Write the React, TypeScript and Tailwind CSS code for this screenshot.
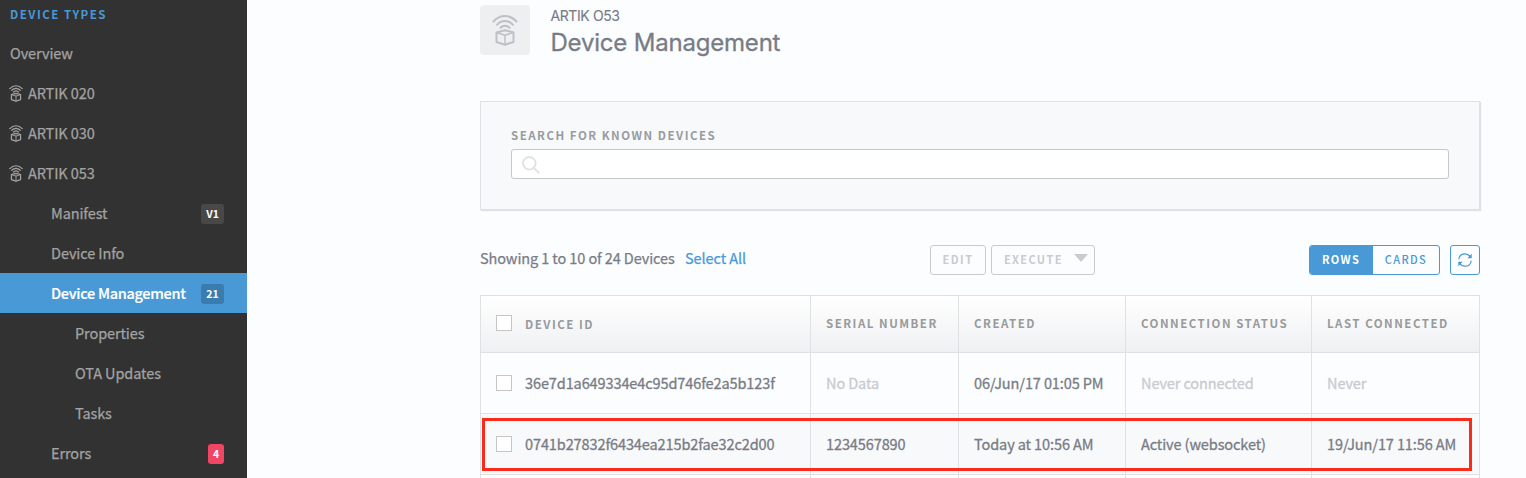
import type { ReactNode } from 'react';

function DeviceIcon({ className, stroke }: { className: string; stroke: number }) {
  return (
    <svg viewBox="0 0 26 31" className={className} fill="none" stroke="currentColor" strokeWidth={stroke} strokeLinecap="round" strokeLinejoin="round">
      <path d="M1.500 6.500C8 -.7 18 -.7 24.500 6.500" />
      <path d="M5 9.800C9.500 4.700 16.500 4.700 21 9.800" />
      <path d="M8.500 12.800C11 10.100 15 10.100 17.500 12.800" />
      <path d="M13 15.200L21.500 17.500V27L13 29.800L4.500 27V17.500Z" />
      <path d="M4.500 17.500L13 20.300L21.500 17.500M13 20.300V29.500" strokeWidth={stroke * 0.75} />
    </svg>
  );
}

type NavProps = { children: ReactNode; pad: string; icon?: boolean; active?: boolean; badge?: string; badgeClass?: string };

function NavItem({ children, pad, icon, active, badge, badgeClass }: NavProps) {
  return (
    <a className={`flex h-10 items-center pr-[23px] text-[14.500px] ${pad} ${active ? 'bg-[#4899d6] font-medium tracking-[-0.300px] text-white [-webkit-text-stroke:0.2px]' : 'tracking-[-0.1px] text-[#a3a3a3] [-webkit-text-stroke:0.25px]'}`}>
      {icon && <DeviceIcon className="mt-px mr-[5px] h-[17px] w-[14px] shrink-0 -ml-px" stroke={2.3} />}
      <span className="whitespace-nowrap">{children}</span>
      {badge && (
        <span className={`mt-[2px] ml-auto flex h-5 items-center justify-center rounded-[3px] text-[10.500px] font-bold tracking-normal text-white [-webkit-text-stroke:0px] ${badgeClass}`}>{badge}</span>
      )}
    </a>
  );
}

function Checkbox() {
  return <span className="mr-[13px] h-4 w-4 shrink-0 border border-[#c6c6c6] bg-white" />;
}

const headers = ['DEVICE ID', 'SERIAL NUMBER', 'CREATED', 'CONNECTION STATUS', 'LAST CONNECTED'];
const rows = [
  ['36e7d1a649334e4c95d746fe2a5b123f', 'No Data', '06/Jun/17 01:05 PM', 'Never connected', 'Never'],
  ['0741b27832f6434ea215b2fae32c2d00', '1234567890', 'Today at 10:56 AM', 'Active (websocket)', '19/Jun/17 11:56 AM'],
];
const muted = ['No Data', 'Never connected', 'Never'];
const gridCols = 'grid grid-cols-[330px_148px_167px_186px_168px]';

export default function App() {
  return (
    <div className="flex h-[478px] w-[1526px] overflow-hidden bg-[#fcfdff] font-['Noto_Sans_CJK_SC',sans-serif] text-[#787c85]">
      <nav className="w-[247px] shrink-0 bg-[#323232]">
        <h2 className="h-[33px] pl-[10px] text-[11.500px] leading-[29px] font-bold tracking-[1.500px] text-[#4899d6]">DEVICE TYPES</h2>
        <NavItem pad="pl-[10px]">Overview</NavItem>
        <NavItem pad="pl-[10px]" icon>ARTIK 020</NavItem>
        <NavItem pad="pl-[10px]" icon>ARTIK 030</NavItem>
        <NavItem pad="pl-[10px]" icon>ARTIK 053</NavItem>
        <NavItem pad="pl-[51px]" badge="V1" badgeClass="w-[23px] bg-[#484848]">Manifest</NavItem>
        <NavItem pad="pl-[51px]">Device Info</NavItem>
        <NavItem pad="pl-[51px]" active badge="21" badgeClass="w-[23px] bg-[#3b7cae]">Device Management</NavItem>
        <NavItem pad="pl-[75px]">Properties</NavItem>
        <NavItem pad="pl-[75px]">OTA Updates</NavItem>
        <NavItem pad="pl-[75px]">Tasks</NavItem>
        <NavItem pad="pl-[51px]" badge="4" badgeClass="w-4 bg-[#ee4663]">Errors</NavItem>
      </nav>

      <main className="ml-[233px] w-[1000px] shrink-0">
        <header className="flex h-[101px] pt-[5px]">
          <div className="flex h-[50px] w-[50px] items-center justify-center rounded bg-[#edeff1] text-[#bdc1c7]">
            <DeviceIcon className="h-[31px] w-[26px]" stroke={2} />
          </div>
          <div className="ml-[20.500px] font-['Inter',sans-serif]">
            <p className="h-[22px] text-[14px] leading-[22px] tracking-[-0.400px] [-webkit-text-stroke:0.15px]">ARTIK O53</p>
            <h1 className="text-[24px] leading-[32px] tracking-[-0.200px] [-webkit-text-stroke:0.3px]">Device Management</h1>
          </div>
        </header>

        <section className="h-[109px] border border-[#dfe2e5] bg-[#f8f9fb] px-[30px] pt-[24px] shadow-[1px_1px_1px_#dfe2e5]">
          <label className="block h-[23px] text-[11.500px] leading-[18px] font-bold tracking-[1.500px] text-[#979ca0]">SEARCH FOR KNOWN DEVICES</label>
          <div className="flex h-[30px] w-[938px] items-center rounded-[3px] border border-[#c6c8ca] bg-white pt-px pl-[10px]">
            <svg viewBox="0 0 18 18" className="h-[18px] w-[18px] text-[#dfe3e6]" fill="none" stroke="currentColor" strokeWidth="1.900">
              <circle cx="7.300" cy="7.300" r="6.300" />
              <path d="M12 12L17.300 17.300" />
            </svg>
          </div>
        </section>

        <div className="mt-[35px] flex h-[30px] items-center text-[14.500px]">
          <span className="w-[205px] pb-[4px] whitespace-nowrap tracking-[-0.1px] [-webkit-text-stroke:0.25px]">Showing 1 to 10 of 24 Devices</span>
          <a className="w-[245px] pb-[4px] tracking-[-0.080px] text-[#4899d6] [-webkit-text-stroke:0.25px]">Select All</a>
          <button className="h-[30px] w-[56px] rounded-[3px] border border-[#c8cbcf] pb-px text-[11px] font-bold tracking-[1.500px] text-[#c8cbcf]">EDIT</button>
          <button className="ml-[5px] flex h-[30px] w-[104px] items-center rounded-[3px] border border-[#c8cbcf] pb-px pl-[12px] text-[11px] font-bold tracking-[1.350px] text-[#c8cbcf]">
            EXECUTE
            <svg viewBox="0 0 14 8" className="mb-[3px] ml-auto mr-[6px] h-2 w-[14px]" fill="currentColor"><path d="M0 0H14L7 8Z" /></svg>
          </button>
          <div className="ml-auto flex h-[30px] w-[131px] overflow-hidden rounded-[3px] border border-[#4899d6] text-[11px] tracking-[1.350px]">
            <button className="w-[63px] bg-[#4899d6] pr-px pb-px font-bold text-white">ROWS</button>
            <button className="flex-1 pb-px font-medium text-[#4899d6]">CARDS</button>
          </div>
          <button className="ml-[10px] flex h-[30px] w-[30px] items-center justify-center rounded-[3px] border border-[#4899d6] pr-px pb-px text-[#4899d6]">
            <svg viewBox="0 0 14 14" className="h-[14px] w-[14px]" fill="none" stroke="currentColor" strokeWidth="1.200">
              <path d="M.8 6.300C1.200 3 3.800 .8 7 .8C9.300 .8 11.200 1.900 12.300 3.800M13.200 7.700C12.800 11 10.200 13.200 7 13.200C4.700 13.200 2.800 12.100 1.700 10.200" />
              <path d="M13.700 .8V5.200H9.300ZM.3 13.200V8.800H4.700Z" fill="currentColor" stroke="none" />
            </svg>
          </button>
        </div>

        <div className="relative mt-5 border-t border-l border-[#dfe2e5]">
          <div className={`${gridCols} h-[57px] bg-gradient-to-b from-white to-[#eff0f2]`}>
            {headers.map((h, i) => (
              <div key={h} className="flex items-center border-r border-b border-[#dfe2e5] pb-[2px] pl-[15px] text-[11.500px] font-bold tracking-[1.500px] whitespace-nowrap text-[#979a9c]">
                {i === 0 && <Checkbox />}
                <span className={i === 0 ? 'pt-[4px]' : 'pt-[2px]'}>{h}</span>
              </div>
            ))}
          </div>
          {rows.map((row, r) => (
            <div key={row[0]} className={`${gridCols} h-[61px] ${r === 1 ? 'bg-[#f8f9fb]' : ''}`}>
              {row.map((cell, i) => (
                <div key={i} className={`flex items-center border-r border-b border-[#dfe2e5] pl-[15px] text-[14.500px] tracking-[-0.1px] whitespace-nowrap [-webkit-text-stroke:0.3px] ${muted.includes(cell) ? 'text-[#c8cbcf]' : ''}`}>
                  {i === 0 && <Checkbox />}
                  <span>{cell}</span>
                </div>
              ))}
            </div>
          ))}
          <div className={`${gridCols} h-[61px]`}>
            {headers.map((h) => <div key={h} className="border-r border-[#dfe2e5]" />)}
          </div>
          <div className="pointer-events-none absolute top-[122px] left-[1px] h-[53px] w-[990px] border-[3px] border-[#fb2b1c]" />
        </div>
      </main>
    </div>
  );
}
